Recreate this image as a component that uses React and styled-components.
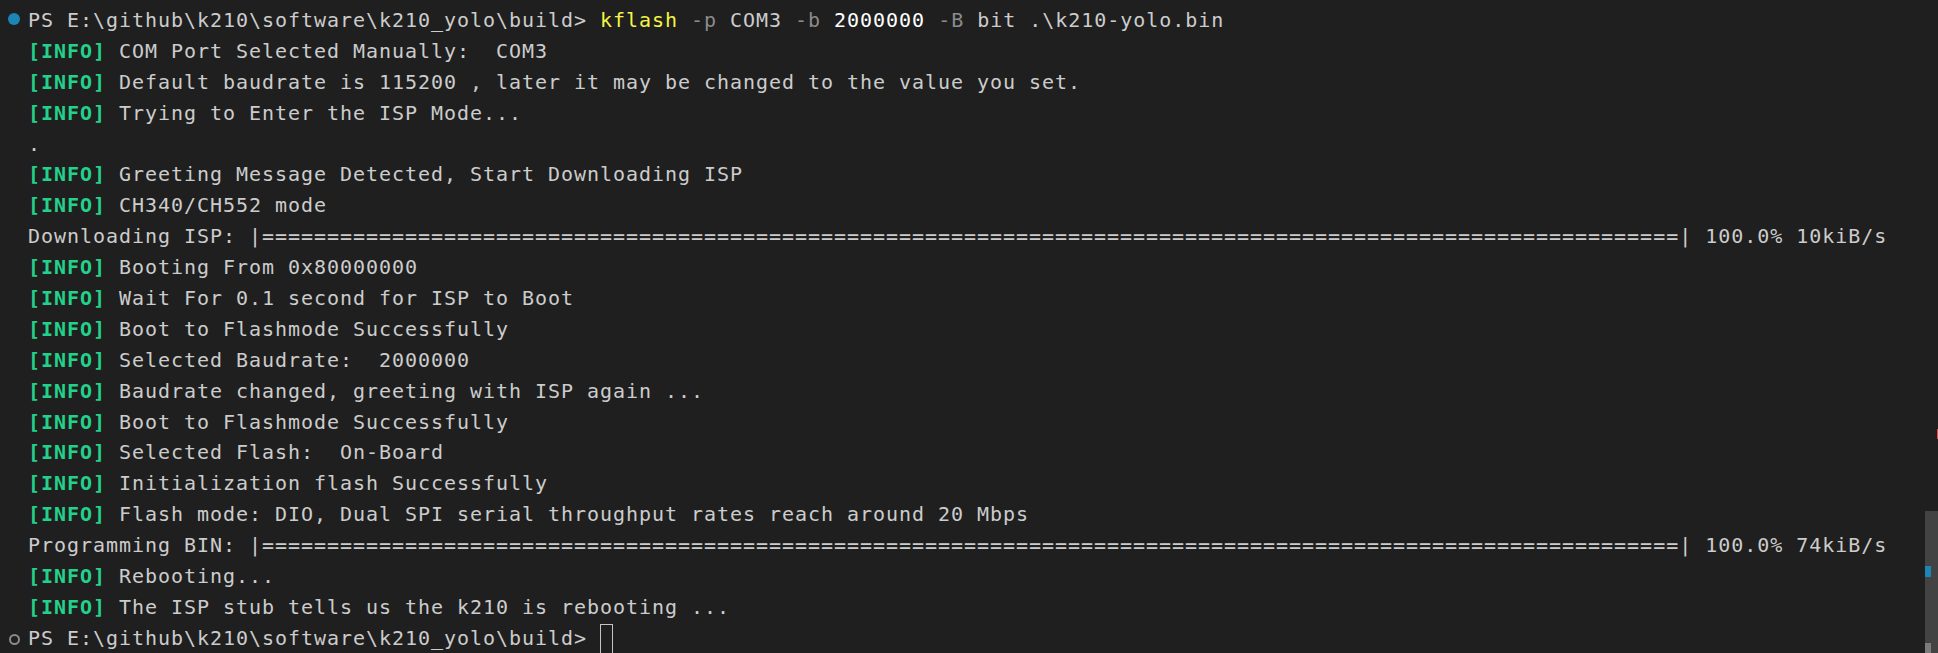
import React from 'react';
import styled, { createGlobalStyle } from 'styled-components';

const GlobalStyle = createGlobalStyle`
    html, body {
        margin: 0;
        padding: 0;
        background: #1f1f1f;
    }
`;

const Window = styled.div`
    display: flex;
    width: 1938px;
    height: 653px;
    background: #1f1f1f;
    overflow: hidden;
`;

const Terminal = styled.div`
    flex: 1;
    display: flex;
    flex-direction: column;
    padding-top: 5px;
    font-family: "DejaVu Sans Mono", "Liberation Mono", monospace;
    font-size: 20px;
    letter-spacing: 0.96px;
    color: #cccccc;
`;

const Line = styled.div`
    display: flex;
    align-items: flex-start;
    height: 30.9px;
    line-height: 30.9px;
    white-space: pre;
`;

const Gutter = styled.div`
    width: 28px;
    flex: none;
    display: flex;
    justify-content: center;
    padding-top: 8px;
    box-sizing: border-box;
`;

const Mark = styled.span`
    display: block;
    width: ${props => props.hollow ? '7px' : '12px'};
    height: ${props => props.hollow ? '7px' : '12px'};
    margin-top: ${props => props.hollow ? '3px' : '0'};
    border-radius: 50%;
    background: ${props => props.hollow ? 'transparent' : '#1b85b8'};
    border: ${props => props.hollow ? '2px solid #8a8a8a' : 'none'};
`;

const Seg = styled.span`
    color: ${props => props.color || '#cccccc'};
    font-weight: ${props => props.bold ? 'bold' : 'normal'};
`;

const Cursor = styled.span`
    display: inline-block;
    width: 11px;
    height: 28px;
    margin-top: 1px;
    border: 1px solid #c4c4c4;
    vertical-align: top;
`;

const ScrollTrack = styled.div`
    position: relative;
    width: 13px;
    flex: none;
    display: flex;
    flex-direction: column;
`;

const Slider = styled.div`
    margin-top: auto;
    height: 142px;
    background: #434343;
`;

const Marker = styled.div`
    position: absolute;
    left: ${props => props.right ? '12px' : '0'};
    width: ${props => props.right ? '1px' : '6px'};
    background: ${props => props.color};
`;

const GREEN = '#23d18b';
const PROMPT = 'PS E:\\github\\k210\\software\\k210_yolo\\build> ';

const info = (text) => [
    { text: '[INFO]', color: GREEN, bold: true },
    { text: ' ' + text },
];

const bar = (label, speed) => [
    { text: label + ': |' + '='.repeat(109) + '| 100.0% ' + speed },
];

const lines = [
    {
        mark: 'dot',
        segs: [
            { text: PROMPT },
            { text: 'kflash', color: '#f5f543' },
            { text: ' -p', color: '#8b8b8b' },
            { text: ' COM3' },
            { text: ' -b', color: '#8b8b8b' },
            { text: ' 2000000', color: '#ffffff' },
            { text: ' -B', color: '#8b8b8b' },
            { text: ' bit .\\k210-yolo.bin' },
        ],
    },
    { segs: info('COM Port Selected Manually:  COM3') },
    { segs: info('Default baudrate is 115200 , later it may be changed to the value you set.') },
    { segs: info('Trying to Enter the ISP Mode...') },
    { segs: [{ text: '.' }] },
    { segs: info('Greeting Message Detected, Start Downloading ISP') },
    { segs: info('CH340/CH552 mode') },
    { segs: bar('Downloading ISP', '10kiB/s') },
    { segs: info('Booting From 0x80000000') },
    { segs: info('Wait For 0.1 second for ISP to Boot') },
    { segs: info('Boot to Flashmode Successfully') },
    { segs: info('Selected Baudrate:  2000000') },
    { segs: info('Baudrate changed, greeting with ISP again ...') },
    { segs: info('Boot to Flashmode Successfully') },
    { segs: info('Selected Flash:  On-Board') },
    { segs: info('Initialization flash Successfully') },
    { segs: info('Flash mode: DIO, Dual SPI serial throughput rates reach around 20 Mbps') },
    { segs: bar('Programming BIN', '74kiB/s') },
    { segs: info('Rebooting...') },
    { segs: info('The ISP stub tells us the k210 is rebooting ...') },
    { mark: 'hollow', segs: [{ text: PROMPT }], cursor: true },
];

// overview ruler marks: [top, height, color, rightColumn]
const markers = [
    [429, 10, '#f14c4c', true],
    [566, 11, '#1b85b8', false],
    [643, 10, '#7b7b7b', false],
];

function App() {
    return (
        <Window>
            <GlobalStyle />
            <Terminal>
                {lines.map((line, i) => (
                    <Line key={i}>
                        <Gutter>
                            {line.mark && <Mark hollow={line.mark === 'hollow'} />}
                        </Gutter>
                        <span>
                            {line.segs.map((s, j) => (
                                <Seg key={j} color={s.color} bold={s.bold}>{s.text}</Seg>
                            ))}
                            {line.cursor && <Cursor />}
                        </span>
                    </Line>
                ))}
            </Terminal>
            <ScrollTrack>
                <Slider />
                {markers.map(([top, h, color, right], i) => (
                    <Marker key={i} color={color} right={right} style={{ top, height: h }} />
                ))}
            </ScrollTrack>
        </Window>
    );
}

export default App;
